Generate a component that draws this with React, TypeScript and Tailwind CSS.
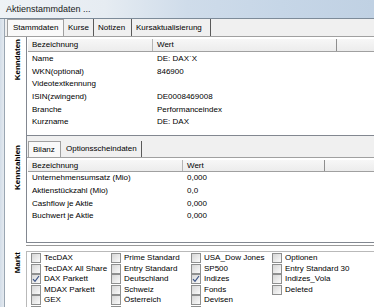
const stamm = [
  ['Name', 'DE: DAX`X'],
  ['WKN(optional)', '846900'],
  ['Videotextkennung', ''],
  ['ISIN(zwingend)', 'DE0008469008'],
  ['Branche', 'Performanceindex'],
  ['Kurzname', 'DE: DAX'],
]

const bilanz = [
  ['Unternehmensumsatz (Mio)', '0,000'],
  ['Aktienstückzahl (Mio)', '0,0'],
  ['Cashflow je Aktie', '0,000'],
  ['Buchwert je Aktie', '0,000'],
]

const markt: [string, boolean][][] = [
  [['TecDAX', false], ['TecDAX All Share', false], ['DAX Parkett', true], ['MDAX Parkett', false], ['GEX', false], ['', false]],
  [['Prime Standard', false], ['Entry Standard', false], ['Deutschland', false], ['Schweiz', false], ['Österreich', false], ['', false]],
  [['USA_Dow Jones', false], ['SP500', false], ['Indizes', true], ['Fonds', false], ['Devisen', false], ['', false]],
  [['Optionen', false], ['Entry Standard 30', false], ['Indizes_Vola', false], ['Deleted', false]],
]

function SideLabel({ text, top }: { text: string; top: string }) {
  return (
    <div className={`w-[21px] shrink-0 pl-[8px] ${top}`}>
      <span className="block [writing-mode:vertical-rl] rotate-180 font-bold text-[8px] leading-[9px]">{text}</span>
    </div>
  )
}

function Check({ checked }: { checked: boolean }) {
  return (
    <div className="w-[10px] h-[10px] shrink-0 border border-[#8e8f8f] bg-gradient-to-br from-[#d6d6d6] to-[#fbfbfb] flex items-center justify-center">
      {checked && (
        <svg width="8" height="8" viewBox="0 0 8 8">
          <path d="M1 4.2 L3 6.4 L7 1" fill="none" stroke="#3c5486" strokeWidth="1.2" />
        </svg>
      )}
    </div>
  )
}

export default function App() {
  return (
    <div className="w-[374px] h-[307px] overflow-hidden bg-white font-['Liberation_Sans',Arial,sans-serif] text-[8px] leading-none text-black">
      <div className="h-[19px] flex items-center pl-[6px] border-b border-[#7d8b99] bg-[linear-gradient(90deg,#eef2f6_0%,#e6ecf2_28%,#cfdcea_50%,#c6d6e7_75%,#c0d1e3_100%)] text-[9px] text-[#1a1a1a]">
        Aktienstammdaten ...
      </div>
      <div className="flex h-[288px]">
        <div className="w-[5px] shrink-0 bg-gradient-to-r from-[#d3dde8] to-[#e4eaf0] border-r border-[#9aa6b2]" />
        <div className="flex-1 min-w-0 flex flex-col">
          {/* main tabs */}
          <div className="h-[18px] shrink-0 flex items-end pl-[2px] bg-[#f0f0f0] border-b border-[#a0a0a0]">
            <div className="h-[17px] w-[57px] pl-[5px] flex items-center bg-[#f9f9f9] border-t border-l border-r border-[#a0a0a0]">Stammdaten</div>
            <div className="h-[17px] w-[30px] pl-[4px] flex items-center border-r border-[#5a5a5a]">Kurse</div>
            <div className="h-[17px] w-[38px] pl-[4px] flex items-center border-r border-[#5a5a5a]">Notizen</div>
            <div className="h-[17px] w-[79px] pl-[4px] flex items-center border-r border-[#5a5a5a]">Kursaktualisierung</div>
          </div>

          {/* Kenndaten */}
          <div className="flex h-[99px] shrink-0">
            <SideLabel text="Kenndaten" top="pt-[2px]" />
            <div className="flex-1 min-w-0 border-l border-b border-[#828790] pt-[2px]">
              <div className="ml-[1px] flex h-[13px] bg-gradient-to-b from-[#f7f7f7] to-[#ececec] border-b border-[#a0a0a0]">
                <div className="w-[125px] pl-[4px] flex items-center border-r border-[#b5b5b5]">Bezeichnung</div>
                <div className="w-[184px] pl-[4px] flex items-center border-r border-[#8e8e8e]">Wert</div>
              </div>
              <div className="pt-[1px]">
                {stamm.map(([k, v]) => (
                  <div key={k} className="flex h-[12.6px] items-center">
                    <div className="w-[126px] pl-[5px]">{k}</div>
                    <div className="pl-[4px]">{v}</div>
                  </div>
                ))}
              </div>
            </div>
          </div>

          {/* Kennzahlen */}
          <div className="flex h-[107px] shrink-0">
            <SideLabel text="Kennzahlen" top="pt-[9px]" />
            <div className="flex-1 min-w-0 border-l border-b border-[#828790]">
              <div className="h-[22px] flex items-end pl-[1px] bg-[#f0f0f0] border-b border-[#a0a0a0]">
                <div className="h-[16px] w-[33px] pl-[4px] flex items-center bg-[#f9f9f9] border-t border-l border-r border-[#a0a0a0]">Bilanz</div>
                <div className="h-[16px] w-[81px] pl-[5px] flex items-center border-r border-[#5a5a5a]">Optionsscheindaten</div>
              </div>
              <div className="pt-[2px]">
                <div className="ml-[1px] flex h-[12px] bg-gradient-to-b from-[#f7f7f7] to-[#ececec] border-b border-[#a0a0a0]">
                  <div className="w-[155px] pl-[4px] flex items-center border-r border-[#b5b5b5]">Bezeichnung</div>
                  <div className="w-[142px] pl-[4px] flex items-center border-r border-[#8e8e8e]">Wert</div>
                </div>
                {bilanz.map(([k, v]) => (
                  <div key={k} className="flex h-[12.7px] items-center">
                    <div className="w-[156px] pl-[5px]">{k}</div>
                    <div className="pl-[4px]">{v}</div>
                  </div>
                ))}
              </div>
            </div>
          </div>

          {/* splitter */}
          <div className="flex h-[8px] shrink-0">
            <div className="w-[21px] shrink-0" />
            <div className="flex-1 pt-[2px]">
              <div className="h-[1px] bg-[#9a9a9a]" />
            </div>
          </div>

          {/* Markt */}
          <div className="flex flex-1 min-h-0 overflow-hidden">
            <SideLabel text="Markt" top="pt-[1px]" />
            <div className="flex-1 min-w-0 border-l border-t border-[#b9b9b9] pt-[1px] pl-[4px] grid grid-cols-[80px_80px_81px_80px] content-start">
              {markt.map((col, ci) => (
                <div key={ci} className="flex flex-col">
                  {col.map(([label, checked], ri) => (
                    <div key={ri} className="h-[10.5px] shrink-0 flex items-center gap-[3px]">
                      <Check checked={checked} />
                      <span className="whitespace-nowrap">{label}</span>
                    </div>
                  ))}
                </div>
              ))}
            </div>
          </div>
        </div>
      </div>
    </div>
  )
}
